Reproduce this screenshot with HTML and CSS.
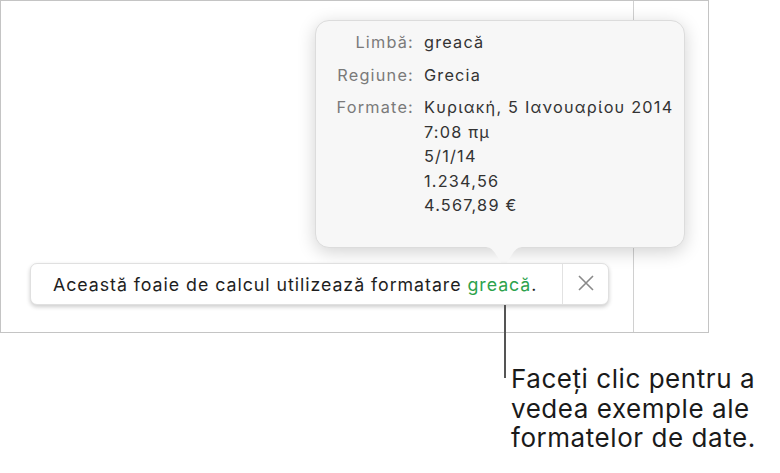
FILE: index.html
```html
<!DOCTYPE html>
<html>
<head>
<meta charset="utf-8">
<link rel="stylesheet" href="styles.css">
</head>
<body>
<div class="stage">
  <div class="frame">
    <div class="cell-main"></div>
    <div class="cell-side"></div>
  </div>

  <div class="popover">
    <div class="pop-grid">
      <div class="lbl">Limbă:</div>
      <div class="val">greacă</div>
      <div class="lbl">Regiune:</div>
      <div class="val">Grecia</div>
      <div class="lbl">Formate:</div>
      <div class="val multi">Κυριακή, 5 Ιανουαρίου 2014<br>7:08 πμ<br>5/1/14<br>1.234,56<br>4.567,89 €</div>
    </div>
    <svg class="tail" width="40" height="20" viewBox="0 0 40 20">
      <path d="M0 0 C6 0 8 2 11 6 L18 17 Q20 20 22 17 L29 6 C32 2 34 0 40 0 Z" fill="#f7f7f7"/>
    </svg>
  </div>

  <div class="banner">
    <div class="banner-text"><span>Această foaie de calcul utilizează formatare <span class="green">greacă</span>.</span></div>
    <div class="banner-close">
      <svg width="16" height="16" viewBox="0 0 16 16"><path d="M1 1 L15 15 M15 1 L1 15" stroke="#8a8a8a" stroke-width="1.6" fill="none"/></svg>
    </div>
  </div>

  <div class="leader"></div>

  <div class="caption">Faceți clic pentru a<br>vedea exemple ale<br>formatelor de date.</div>
</div>
</body>
</html>
```
FILE: styles.css
```css
html, body {
  margin: 0;
  padding: 0;
  background: #ffffff;
}
body {
  font-family: "Inter", "Liberation Sans", sans-serif;
}
.stage {
  position: relative;
  width: 780px;
  height: 473px;
  overflow: hidden;
}
.frame {
  display: flex;
  width: 707px;
  height: 331px;
  border: 1px solid #c4c4c4;
  box-sizing: content-box;
}
.cell-main {
  width: 632px;
  border-right: 1px solid #d0d0d0;
}
.cell-side {
  flex: 1;
}
.popover {
  position: absolute;
  left: 315px;
  top: 20px;
  width: 370px;
  height: 228px;
  box-sizing: border-box;
  background: #f7f7f7;
  border-radius: 14px;
  border: 1px solid #dcdcdc;
  box-shadow: 0 4px 18px rgba(0, 0, 0, 0.18);
  padding-top: 9px;
}
.pop-grid {
  display: grid;
  grid-template-columns: 98px auto;
  column-gap: 10px;
  row-gap: 8px;
  font-size: 16.3px;
  letter-spacing: 1.2px;
  line-height: 24.5px;
}
.lbl {
  text-align: right;
  color: #7a7a7a;
}
.val {
  color: #333333;
}
.tail {
  position: absolute;
  left: 168px;
  top: 226px;
  display: block;
}
.banner {
  position: absolute;
  left: 30px;
  top: 263px;
  width: 579px;
  height: 42px;
  box-sizing: border-box;
  background: #ffffff;
  border-radius: 7px;
  border: 1px solid #e0e0e0;
  box-shadow: 0 2px 4px rgba(0, 0, 0, 0.2);
  display: flex;
  align-items: stretch;
}
.banner-text {
  flex: 1;
  display: flex;
  align-items: center;
  padding-left: 22px;
  font-size: 17.8px;
  letter-spacing: 0.95px;
  color: #1e1e1e;
}
.green {
  color: #2ca24c;
}
.banner-close {
  width: 45px;
  border-left: 1px solid #e2e2e2;
  display: flex;
  align-items: center;
  justify-content: center;
}
.banner-close svg {
  display: block;
  margin-left: 1px;
  margin-top: -3px;
}
.leader {
  position: absolute;
  left: 504px;
  top: 305px;
  width: 1.5px;
  height: 73px;
  background: #555555;
}
.caption {
  position: absolute;
  left: 511px;
  top: 364px;
  font-size: 26px;
  letter-spacing: 0.55px;
  line-height: 29.5px;
  color: #1a1a1a;
}
```
